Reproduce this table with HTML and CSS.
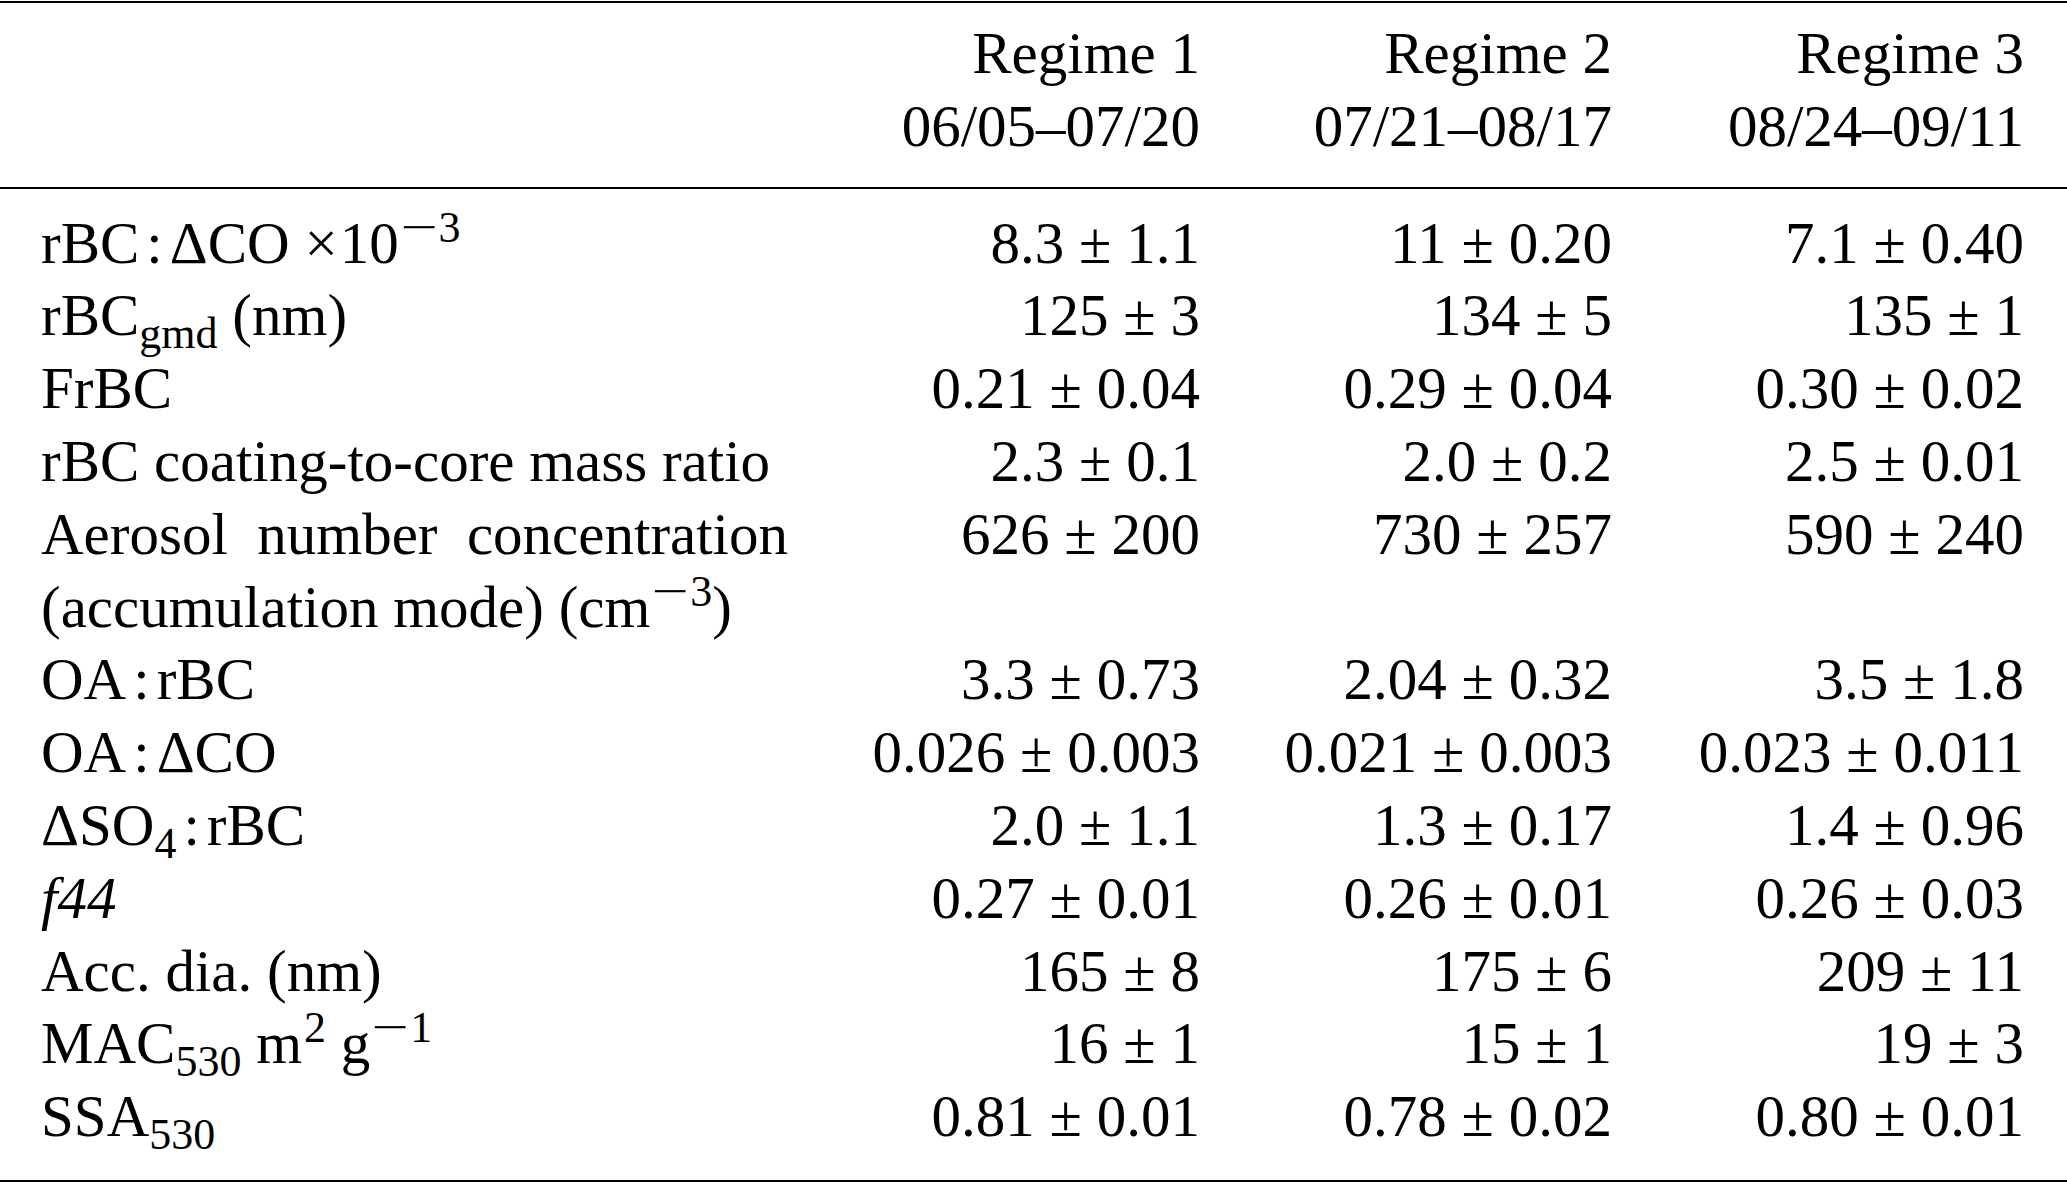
FILE: index.html
```html
<!DOCTYPE html>
<html lang="en">
<head>
<meta charset="utf-8">
<title>Regime table</title>
<link rel="stylesheet" href="styles.css">
</head>
<body>
<div class="table">
  <div class="grid head">
    <div class="label"></div>
    <div class="num">Regime 1<br>06/05–07/20</div>
    <div class="num">Regime 2<br>07/21–08/17</div>
    <div class="num">Regime 3<br>08/24–09/11</div>
  </div>
  <div class="grid body">
    <div class="label">rBC<span class="op">:</span>ΔCO <span class="times">×</span>10<span class="sup"><span class="minus">−</span>3</span></div>
    <div class="num">8.3 ± 1.1</div>
    <div class="num">11 ± 0.20</div>
    <div class="num">7.1 ± 0.40</div>

    <div class="label">rBC<span class="sub">gmd</span> (nm)</div>
    <div class="num">125 ± 3</div>
    <div class="num">134 ± 5</div>
    <div class="num">135 ± 1</div>

    <div class="label">FrBC</div>
    <div class="num">0.21 ± 0.04</div>
    <div class="num">0.29 ± 0.04</div>
    <div class="num">0.30 ± 0.02</div>

    <div class="label">rBC coating-to-core mass ratio</div>
    <div class="num">2.3 ± 0.1</div>
    <div class="num">2.0 ± 0.2</div>
    <div class="num">2.5 ± 0.01</div>

    <div class="label">Aerosol number concentration (accumulation mode) (cm<span class="sup"><span class="minus">−</span>3</span>)</div>
    <div class="num">626 ± 200</div>
    <div class="num">730 ± 257</div>
    <div class="num">590 ± 240</div>

    <div class="label">OA<span class="op">:</span>rBC</div>
    <div class="num">3.3 ± 0.73</div>
    <div class="num">2.04 ± 0.32</div>
    <div class="num">3.5 ± 1.8</div>

    <div class="label">OA<span class="op">:</span>ΔCO</div>
    <div class="num">0.026 ± 0.003</div>
    <div class="num">0.021 ± 0.003</div>
    <div class="num">0.023 ± 0.011</div>

    <div class="label">ΔSO<span class="sub">4</span><span class="op">:</span>rBC</div>
    <div class="num">2.0 ± 1.1</div>
    <div class="num">1.3 ± 0.17</div>
    <div class="num">1.4 ± 0.96</div>

    <div class="label"><i>f44</i></div>
    <div class="num">0.27 ± 0.01</div>
    <div class="num">0.26 ± 0.01</div>
    <div class="num">0.26 ± 0.03</div>

    <div class="label">Acc. dia. (nm)</div>
    <div class="num">165 ± 8</div>
    <div class="num">175 ± 6</div>
    <div class="num">209 ± 11</div>

    <div class="label">MAC<span class="sub">530</span> m<span class="sup">2</span> g<span class="sup"><span class="minus">−</span>1</span></div>
    <div class="num">16 ± 1</div>
    <div class="num">15 ± 1</div>
    <div class="num">19 ± 3</div>

    <div class="label">SSA<span class="sub">530</span></div>
    <div class="num">0.81 ± 0.01</div>
    <div class="num">0.78 ± 0.02</div>
    <div class="num">0.80 ± 0.01</div>
  </div>
</div>
</body>
</html>
```
FILE: styles.css
```css
html, body {
  margin: 0;
  padding: 0;
  background: #ffffff;
}

body {
  color: #000000;
  font-family: "Liberation Serif", "Times New Roman", serif;
  font-size: 59px;
  line-height: 72.8px;
}

.table {
  margin-top: 1px;
  border-top: 2px solid #000000;
  border-bottom: 2px solid #000000;
}

.grid {
  display: grid;
  grid-template-columns: 747px 1fr 1fr 1fr;
  align-items: start;
  padding-left: 41px;
  padding-right: 43px;
}

.head {
  padding-top: 14px;
  padding-bottom: 24px;
  border-bottom: 2px solid #000000;
}

.body {
  padding-top: 18px;
  padding-bottom: 27px;
}

.label {
  text-align: justify;
}

.num {
  text-align: right;
  white-space: nowrap;
}

.op {
  padding: 0 7px;
}

.times {
  margin-right: 2px;
}

.sub {
  font-size: 44px;
  line-height: 0;
  vertical-align: -13px;
}

.sup {
  font-size: 44px;
  line-height: 0;
  vertical-align: 21px;
  margin-left: 2px;
}

.minus {
  display: inline-block;
  transform: scaleX(1.5);
  margin: 0 7px 0 6px;
}
```
